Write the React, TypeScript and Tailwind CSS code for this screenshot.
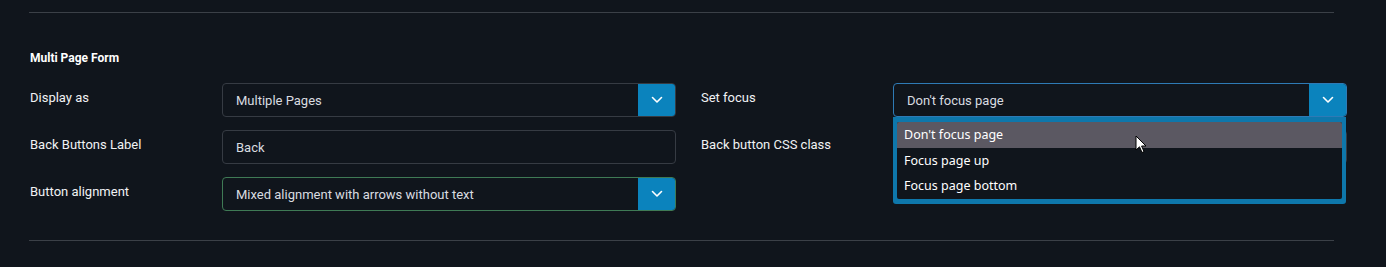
import React from "react";

const font = { fontFamily: "Roboto, 'Liberation Sans', sans-serif" };

function Chevron() {
  return (
    <svg width="12" height="8" viewBox="0 0 12 8" fill="none">
      <path d="M1.5 1.5 L6 6 L10.5 1.5" stroke="#ffffff" strokeWidth="1.6" strokeLinecap="round" strokeLinejoin="round" />
    </svg>
  );
}

function Select({ value, border }: { value: string; border: string }) {
  return (
    <div className={`flex h-[34px] w-[454px] items-stretch rounded-[4px] border ${border} bg-[#10151c]`}>
      <div className="flex flex-1 items-center pl-[13px] pt-[1px] text-[13px] text-[#d9dce0]">{value}</div>
      <div className="flex w-[37px] items-center justify-center rounded-r-[3px] bg-[#0b83bd]">
        <Chevron />
      </div>
    </div>
  );
}

function Input({ value }: { value: string }) {
  return (
    <div className="flex h-[34px] w-[454px] items-center rounded-[4px] border border-[#363b43] bg-[#10151c] pl-[13px] pt-[1px] text-[13px] text-[#d9dce0]">
      {value}
    </div>
  );
}

function Row({ label, children }: { label: string; children: React.ReactNode }) {
  return (
    <div className="flex items-start">
      <div className="w-[192px] pt-[5px] text-[13px] font-normal text-[#f0f2f4]">{label}</div>
      {children}
    </div>
  );
}

export default function App() {
  return (
    <div className="h-[267px] w-[1386px] overflow-hidden bg-[#10151c]" style={font}>
      <div className="pt-[12px] pl-[29px] pr-[52px]">
        <div className="h-[1px] bg-[#3b4047]" />
      </div>
      <div className="pl-[30px] pt-[37px]">
        <div className="text-[12px] font-bold leading-[16px] text-white">Multi Page Form</div>
        <div className="mt-[17px] flex gap-[25px]">
          <div className="flex flex-col gap-[13px]">
            <Row label="Display as">
              <Select value="Multiple Pages" border="border-[#363b43]" />
            </Row>
            <Row label="Back Buttons Label">
              <Input value="Back" />
            </Row>
            <Row label="Button alignment">
              <Select value="Mixed alignment with arrows without text" border="border-[#3f7a55]" />
            </Row>
          </div>
          <div className="flex flex-col gap-[13px]">
            <div className="relative">
              <Row label="Set focus">
                <Select value="Don't focus page" border="border-[#2e7ab5]" />
              </Row>
              <div
                className="absolute left-[192px] top-[34px] z-10 w-[453px] rounded-b-[3px] bg-[#0e77ab] px-[4px] pt-[5px] pb-[5px]"
                style={{ fontFamily: "'Noto Sans', 'Open Sans', sans-serif" }}
              >
                <div className="overflow-hidden rounded-[2px] bg-[#10151c] text-[12.5px] text-white">
                  <div className="flex h-[26px] items-center bg-[#5b5862] pl-[7px]">Don&apos;t focus page</div>
                  <div className="flex h-[26px] items-center pl-[7px]">Focus page up</div>
                  <div className="flex h-[25px] items-center pl-[7px]">Focus page bottom</div>
                </div>
              </div>
              <svg className="absolute left-[434px] top-[52px] z-20" width="12" height="19" viewBox="0 0 12 19">
                <path d="M1 1 L1 15 L4.5 11.8 L7 17.5 L9 16.6 L6.6 11 L11 11 Z" fill="#ffffff" stroke="#000000" strokeWidth="1" strokeLinejoin="round" />
              </svg>
            </div>
            <Row label="Back button CSS class">
              <Input value="" />
            </Row>
          </div>
        </div>
      </div>
      <div className="pt-[29px] pl-[29px] pr-[52px]">
        <div className="h-[1px] bg-[#3b4047]" />
      </div>
    </div>
  );
}
